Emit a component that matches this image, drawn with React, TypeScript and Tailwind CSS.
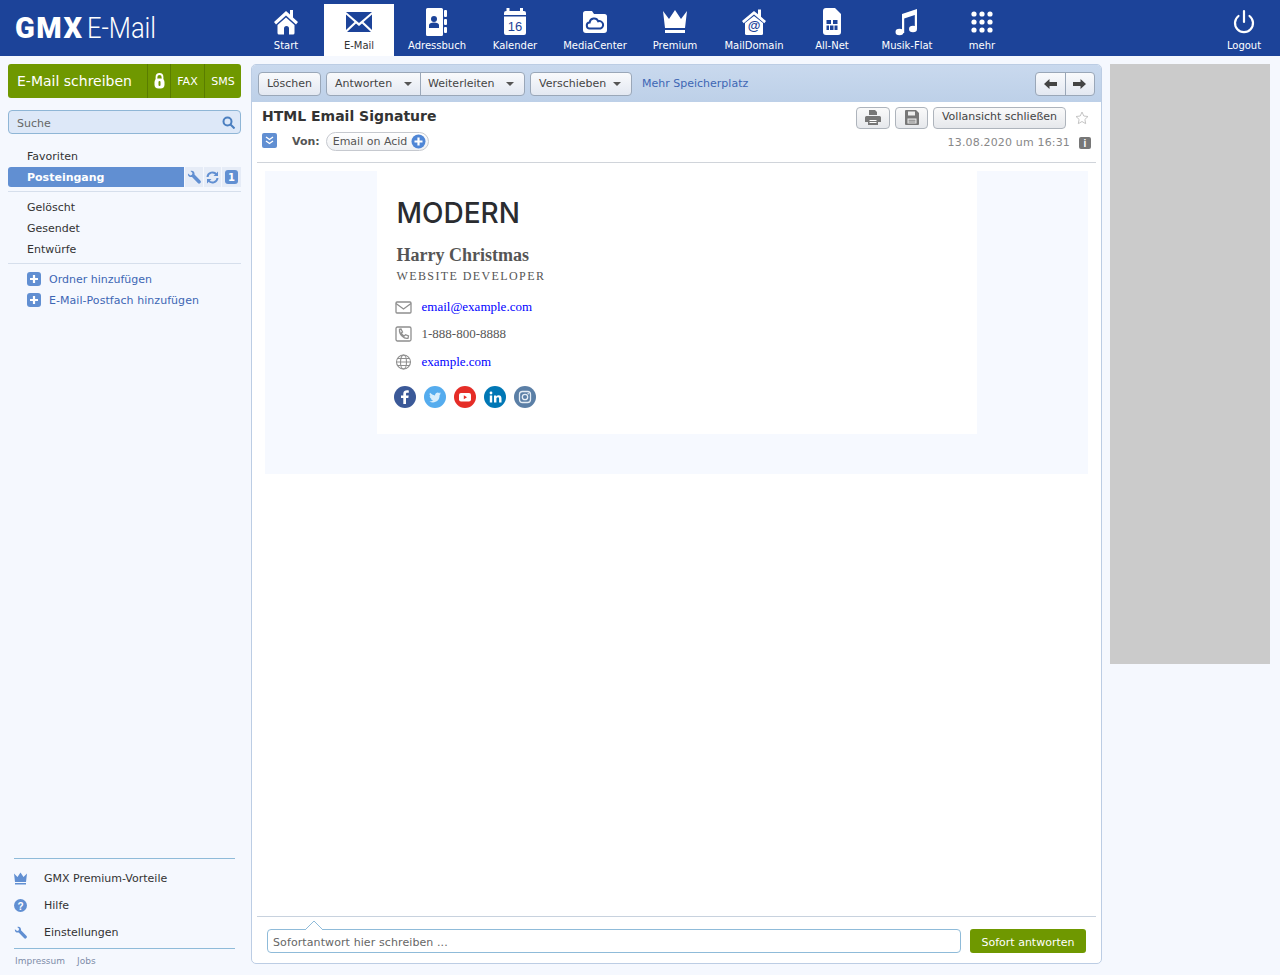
import React from "react";

const F = "font-['DejaVu_Sans',Verdana,sans-serif]";

function TopIcon({ name }: { name: string }) {
  const blue = "#1c4399";
  const c = name === "E-Mail" ? blue : "#fff";
  switch (name) {
    case "Start":
      return (
        <svg width="26" height="28" viewBox="0 0 26 28">
          <path d="M1 14 13 3l4 3.600V2h3v7.500l5 4.500-2 2.400L13 7.400 3 16.400z" fill={c} />
          <path d="M4.500 17 13 9.500l8.500 7.500v8a1.500 1.500 0 0 1-1.500 1.500h-4v-6a2.500 2.500 0 0 0-5 0v6H6a1.500 1.500 0 0 1-1.500-1.500z" fill={c} />
        </svg>
      );
    case "E-Mail":
      return (
        <svg width="28" height="24" viewBox="0 0 28 24">
          <path d="M1 2h26L14 13z" fill={c} />
          <path d="M1 4.500 9.500 12 1 20zM27 4.500 18.500 12 27 20zM2 22l9-8.500 3 2.500 3-2.500 9 8.500z" fill={c} />
        </svg>
      );
    case "Adressbuch":
      return (
        <svg width="24" height="28" viewBox="0 0 24 28">
          <path d="M1 1.500A1.500 1.500 0 0 1 2.500 0h14A1.500 1.500 0 0 1 18 1.500v25a1.500 1.500 0 0 1-1.500 1.500h-14A1.500 1.500 0 0 1 1 26.500z" fill={c} />
          <circle cx="9" cy="11" r="3" fill={blue} />
          <path d="M4 20v-3c0-1.500 2-2.500 5-2.500s5 1 5 2.500v3z" fill={blue} />
          <rect x="19" y="2" width="3" height="7" rx="1" fill={c} />
          <rect x="19" y="11" width="3" height="6" rx="1" fill={c} />
          <rect x="19" y="19" width="3" height="6" rx="1" fill={c} />
        </svg>
      );
    case "Kalender":
      return (
        <div className="relative h-[28px] w-[24px]">
          <svg width="24" height="28" viewBox="0 0 24 28">
            <rect x="3.500" y="0" width="3" height="4" fill={c} />
            <rect x="17" y="0" width="3" height="4" fill={c} />
            <path d="M1 5a2 2 0 0 1 2-2h18a2 2 0 0 1 2 2v2H1z" fill={c} />
            <path d="M1 8.500h22V25a2 2 0 0 1-2 2H3a2 2 0 0 1-2-2z" fill={c} />
          </svg>
          <span className="absolute left-0 right-0 top-[11px] text-center font-['Liberation_Sans',sans-serif] text-[13px] leading-[15px] text-[#1c4399]">16</span>
        </div>
      );
    case "MediaCenter":
      return (
        <svg width="26" height="24" viewBox="0 0 26 24">
          <path d="M1 3.500A2.500 2.500 0 0 1 3.500 1H10l2 3h10.500A2.500 2.500 0 0 1 25 6.500V20a3 3 0 0 1-3 3H4a3 3 0 0 1-3-3z" fill={c} />
          <path d="M8 18.500a3 3 0 0 1-.4-6 4.500 4.500 0 0 1 8.600-1.200 3.700 3.700 0 0 1 2.300 7.200z" fill="none" stroke={blue} strokeWidth="2" />
        </svg>
      );
    case "Premium":
      return (
        <svg width="26" height="24" viewBox="0 0 26 24">
          <path d="M1 1l6 8 6-9 6 9 6-8-2 17H3z" fill={c} />
          <rect x="3" y="20" width="20" height="3" fill={c} />
        </svg>
      );
    case "MailDomain":
      return (
        <div className="relative h-[28px] w-[26px]">
          <svg width="26" height="28" viewBox="0 0 26 28">
            <path d="M1 13 13 3l4 3.300V1.500h3v7.300l5 4.200-1.700 2.200L13 6.500 2.700 15.200z" fill={c} />
            <path d="M4 15 13 8l9 7v10.500a1.500 1.500 0 0 1-1.500 1.500h-15A1.500 1.500 0 0 1 4 25.500z" fill={c} />
          </svg>
          <span className="absolute left-0 right-0 top-[11px] text-center font-['Liberation_Sans',sans-serif] text-[13px] font-bold leading-[14px] text-[#1c4399]">@</span>
        </div>
      );
    case "All-Net":
      return (
        <svg width="18" height="27" viewBox="0 0 18 27">
          <path d="M3 0h9l6 6v18a3 3 0 0 1-3 3H3a3 3 0 0 1-3-3V3a3 3 0 0 1 3-3z" fill={c} />
          <path d="M3.500 12H8v4H3.500zM10 12h4.500v4H10zM3.500 17.500H6V22H3.500zM7 17.500h3.500V22H7zM11.500 17.500h3V22h-3z" fill={blue} />
        </svg>
      );
    case "Musik-Flat":
      return (
        <svg width="24" height="28" viewBox="0 0 24 28">
          <path d="M7 6 22 1v20h-2.200V7L9.200 10.500V25H7z" fill={c} />
          <ellipse cx="4.500" cy="24" rx="4" ry="3.300" fill={c} />
          <ellipse cx="18" cy="21" rx="4" ry="3.300" fill={c} />
        </svg>
      );
    case "mehr":
      return (
        <svg width="22" height="22" viewBox="0 0 22 22" fill={c}>
          {[3, 11, 19].flatMap((y) => [3, 11, 19].map((x) => <circle key={`${x}-${y}`} cx={x} cy={y} r="2.600" />))}
        </svg>
      );
    default:
      return (
        <svg width="24" height="26" viewBox="0 0 24 26" fill="none" stroke={c} strokeWidth="2.200" strokeLinecap="round">
          <path d="M12 2v11" />
          <path d="M6.500 7a9 9 0 1 0 11 0" />
        </svg>
      );
  }
}

const tabs: [string, string][] = [
  ["Start", "w-[76px]"],
  ["E-Mail", "w-[70px]"],
  ["Adressbuch", "w-[86px]"],
  ["Kalender", "w-[70px]"],
  ["MediaCenter", "w-[90px]"],
  ["Premium", "w-[70px]"],
  ["MailDomain", "w-[88px]"],
  ["All-Net", "w-[68px]"],
  ["Musik-Flat", "w-[82px]"],
  ["mehr", "w-[68px]"],
];

function Tab({ name, w }: { name: string; w: string }) {
  const active = name === "E-Mail";
  return (
    <div className={`flex h-[52px] flex-col items-center ${w} ${active ? "bg-white text-[#333]" : "text-white"}`}>
      <div className="flex h-[35px] items-center justify-center">
        <TopIcon name={name} />
      </div>
      <span className="text-[10px] leading-[14px]">{name}</span>
    </div>
  );
}

function Plus() {
  return (
    <svg className="-mt-[4px]" width="14" height="14" viewBox="0 0 14 14">
      <rect width="14" height="14" rx="3" fill="#618fd2" />
      <path d="M7 3v8M3 7h8" stroke="#fff" strokeWidth="2.200" />
    </svg>
  );
}

function Wrench({ color = "#618fd2", size = 14 }: { color?: string; size?: number }) {
  return (
    <svg width={size} height={size} viewBox="0 0 14 14">
      <path d="M1 3.500 3.300 5.500 5 4.800 5.500 3 3.500 1C5.500 0 8 1.500 7.500 4.500L13.300 10.500a1.700 1.700 0 0 1-2.500 2.500L5 7C2.500 7.500 .5 6 1 3.500z" fill={color} />
    </svg>
  );
}

function Btn({ children, className = "" }: { children: React.ReactNode; className?: string }) {
  return (
    <div className={`flex h-[24px] items-center justify-center rounded-[4px] border border-[#9aa7b8] bg-gradient-to-b from-[#f9fafc] to-[#e3e8f1] pt-[1px] text-[11px] text-[#444] ${className}`}>
      {children}
    </div>
  );
}

function Caret() {
  return <span className="ml-auto h-0 w-0 border-x-[4px] border-t-[4px] border-x-transparent border-t-[#555]" />;
}

function Row({ children, className = "text-[#333]" }: { children: React.ReactNode; className?: string }) {
  return <div className={`flex h-[21px] items-center pl-[19px] pt-[2px] text-[11px] ${className}`}>{children}</div>;
}

function FootRow({ icon, label }: { icon: React.ReactNode; label: string }) {
  return (
    <div className="flex h-[27px] items-center pt-[2px] text-[11px] text-[#333]">
      <span className="-mt-[2px] flex w-[30px]">{icon}</span>
      {label}
    </div>
  );
}

function Sidebar() {
  return (
    <aside className="flex h-[904px] w-[233px] flex-col">
      <div className="flex h-[34px] items-stretch rounded-[3px] bg-[#6f9800] text-white">
        <div className="flex w-[139px] items-center pl-[9px] text-[14px]">E-Mail schreiben</div>
        <div className="flex w-[23px] items-center justify-center border-l border-[#5a7d00]">
          <svg width="11" height="16" viewBox="0 0 11 16">
            <path d="M2.500 7V4a3 3 0 0 1 6 0V7" fill="none" stroke="#fff" strokeWidth="1.800" />
            <rect x=".5" y="5.500" width="10" height="10" rx="4" fill="#fff" />
            <rect x="4.500" y="8" width="2" height="5" rx="1" fill="#6f9800" />
          </svg>
        </div>
        <div className="flex w-[34px] items-center justify-center border-l border-[#5a7d00] pt-[2px] text-[11px]">FAX</div>
        <div className="flex w-[37px] items-center justify-center border-l border-[#5a7d00] pt-[2px] text-[11px]">SMS</div>
      </div>
      <div className="mt-[12px] flex h-[24px] items-center justify-between rounded-[4px] border border-[#8fb6d6] bg-[#dde8f8] pl-[8px] pr-[5px] text-[11px] text-[#666]">
        <span className="pt-[4px]">Suche</span>
        <svg width="13" height="13" viewBox="0 0 13 13" fill="none" stroke="#4b7fc0" strokeWidth="2">
          <circle cx="5.500" cy="5.500" r="4" />
          <path d="M8.500 8.500 12.500 12.500" />
        </svg>
      </div>
      <div className="mt-[12px]"><Row>Favoriten</Row></div>
      <div className="flex h-[20px] gap-[1px]">
        <div className="flex w-[176px] items-center rounded-l-[3px] bg-[#618fd2] pl-[19px] pt-[2px] text-[11px] font-bold text-white">Posteingang</div>
        <div className="flex w-[18px] items-center justify-center bg-[#e6ecf7]"><Wrench /></div>
        <div className="flex w-[17px] items-center justify-center bg-[#e6ecf7]">
          <svg width="13" height="13" viewBox="0 0 13 13" fill="none" stroke="#618fd2" strokeWidth="2">
            <path d="M1.500 6A5 5 0 0 1 10.500 3.500M11.500 7A5 5 0 0 1 2.500 9.500" />
            <path d="M12 .5v4.500H7.500zM1 12.500V8h4.500z" fill="#618fd2" stroke="none" />
          </svg>
        </div>
        <div className="flex w-[19px] items-center justify-center bg-[#e6ecf7]">
          <span className="flex h-[14px] w-[13px] items-center justify-center rounded-[3px] bg-[#618fd2] text-[10px] font-bold text-white">1</span>
        </div>
      </div>
      <div className="mt-[4px] h-px bg-[#d6dfec]" />
      <div className="mt-[5px]"><Row>Gelöscht</Row></div>
      <Row>Gesendet</Row>
      <Row>Entwürfe</Row>
      <div className="mt-[3px] h-px bg-[#d6dfec]" />
      <div className="mt-[5px]"><Row className="gap-[8px] text-[#3d66b4]"><Plus />Ordner hinzufügen</Row></div>
      <Row className="gap-[8px] tracking-[.05px] text-[#3d66b4]"><Plus />E-Mail-Postfach hinzufügen</Row>
      <div className="mt-auto ml-[6px] w-[221px] border-t border-[#8fbbd9] pt-[6px]">
        <FootRow
          label="GMX Premium-Vorteile"
          icon={<svg width="13" height="13" viewBox="0 0 13 13" fill="#618fd2"><path d="M0 1.500 3.500 5 6.500 .5 9.500 5 13 1.500 12 10H1zM1 11h11v1.500H1z" /></svg>}
        />
        <FootRow
          label="Hilfe"
          icon={
            <svg width="13" height="13" viewBox="0 0 13 13">
              <circle cx="6.500" cy="6.500" r="6.500" fill="#618fd2" />
              <text x="6.500" y="10.500" textAnchor="middle" fontSize="10" fontWeight="700" fill="#fff" fontFamily="Liberation Sans">?</text>
            </svg>
          }
        />
        <FootRow label="Einstellungen" icon={<Wrench size={13} />} />
        <div className="mt-[2px] border-t border-[#8fbbd9] pl-[1px] pt-[6px] text-[9px] leading-[13px] text-[#7d8ca8]">
          <span>Impressum</span>
          <span className="ml-[12px]">Jobs</span>
        </div>
      </div>
    </aside>
  );
}

function Signature() {
  return (
    <div className="mx-[13px] mt-[8px] flex h-[303px] justify-center bg-[#f6f9ff]">
      <div className="h-[263px] w-[600px] bg-white pl-[20px] pt-[24px] font-['Liberation_Serif',serif]">
        <div className="font-['Inter',sans-serif] text-[28px] font-medium leading-[36px] text-[#2a2c30]">MODERN</div>
        <div className="mt-[14px] text-[18px] font-bold leading-[21px] text-[#555]">Harry Christmas</div>
        <div className="mt-[3px] text-[12px] leading-[15px] tracking-[1.400px] text-[#555]">WEBSITE DEVELOPER</div>
        <div className="mt-[13px] flex h-[20px] items-center text-[13px] text-[#0000ff]">
          <svg className="ml-[-2px]" width="17" height="13" viewBox="0 0 17 13" fill="none" stroke="#8f8f8f" strokeWidth="1.300">
            <rect x="1" y="1" width="15" height="11" rx="1" />
            <path d="M1 2.500 8.500 8 16 2.500" />
          </svg>
          <span className="ml-[10px]">email@example.com</span>
        </div>
        <div className="mt-[7px] flex h-[20px] items-center text-[13px] text-[#555]">
          <svg className="ml-[-2px]" width="17" height="16" viewBox="0 0 17 16" fill="none" stroke="#8f8f8f" strokeWidth="1.300">
            <rect x="1" y="1" width="15" height="14" rx="1.500" />
            <path d="M4 3.500 6 3l1.500 3-1.300 1a6 6 0 0 0 3 3l1.300-1.300 3 1.300-.5 2.300c-4 1-9-4-8.500-8.800z" />
          </svg>
          <span className="ml-[10px]">1-888-800-8888</span>
        </div>
        <div className="mt-[8px] flex h-[20px] items-center text-[13px] text-[#0000ff]">
          <svg className="ml-[-2px]" width="17" height="16" viewBox="0 0 17 16" fill="none" stroke="#8f8f8f" strokeWidth="1.100">
            <circle cx="8.500" cy="8" r="7" />
            <ellipse cx="8.500" cy="8" rx="3" ry="7" />
            <path d="M1.500 8h14M2.500 4.500h12M2.500 11.500h12" />
          </svg>
          <span className="ml-[10px]">example.com</span>
        </div>
        <div className="ml-[-3px] mt-[14px] flex gap-[8px]">
          <svg width="22" height="22" viewBox="0 0 22 22"><circle cx="11" cy="11" r="11" fill="#3b5998" /><path d="M12 18v-6h2.300l.4-2.600H12V8c0-.8.3-1.200 1.300-1.200h1.500V4.500c-2.800-.4-5.500 0-5.500 3.200v1.700H7V12h2.300v6z" fill="#fff" /></svg>
          <svg width="22" height="22" viewBox="0 0 22 22"><circle cx="11" cy="11" r="11" fill="#55acee" /><path d="M17 7.200l-1.500.5 1.200-1.500-1.600.7A2.700 2.700 0 0 0 11 9.400 7 7 0 0 1 6 6.800c-.8 1.300-.3 2.600.7 3.400l-1-.3c0 1.300.8 2.200 2 2.600h-1c.4 1 1.300 1.600 2.400 1.700A5.500 5.500 0 0 1 5.300 15.500c5 2.600 10.500-.5 10.300-6.200z" fill="#d9eefc" /></svg>
          <svg width="22" height="22" viewBox="0 0 22 22"><circle cx="11" cy="11" r="11" fill="#e52d27" /><rect x="5" y="7" width="12" height="8.500" rx="2" fill="#fff" /><path d="M9.800 9.200v4l3.200-2z" fill="#e52d27" /></svg>
          <svg width="22" height="22" viewBox="0 0 22 22"><circle cx="11" cy="11" r="11" fill="#0077b5" /><circle cx="7" cy="7" r="1.400" fill="#fff" /><path d="M5.800 9.500h2.400V16.500H5.800zM10 9.500h2.300v1c.6-.8 1.400-1.200 2.300-1.200 1.900 0 2.900 1.200 2.900 3.300v3.900h-2.400v-3.500c0-1.100-.4-1.700-1.300-1.700s-1.400.7-1.400 1.800v3.400H10z" fill="#fff" /></svg>
          <svg width="22" height="22" viewBox="0 0 22 22" fill="none"><circle cx="11" cy="11" r="11" fill="#5b7fa6" /><rect x="5.500" y="5.500" width="11" height="11" rx="3" stroke="#e5edf5" strokeWidth="1.300" /><circle cx="11" cy="11" r="2.700" stroke="#e5edf5" strokeWidth="1.300" /><circle cx="14.200" cy="7.800" r=".8" fill="#e5edf5" /></svg>
        </div>
      </div>
    </div>
  );
}

function MainPanel() {
  return (
    <main className="ml-[10px] flex h-[900px] w-[851px] flex-col overflow-hidden rounded-[5px] border border-[#bccde4] bg-white">
      <div className="flex h-[37px] items-center bg-gradient-to-b from-[#c9d9ee] to-[#bdd0e8] px-[6px]">
        <Btn className="w-[63px]">Löschen</Btn>
        <div className="ml-[5px] flex h-[24px] w-[199px] rounded-[4px] border border-[#9aa7b8] bg-gradient-to-b from-[#f9fafc] to-[#e3e8f1] pt-[1px] text-[11px] text-[#444]">
          <div className="flex w-[93px] items-center px-[8px]">Antworten<Caret /></div>
          <div className="-mt-[1px] flex flex-1 items-center border-l border-[#9aa7b8] pl-[7px] pr-[10px] pt-[1px]">Weiterleiten<Caret /></div>
        </div>
        <Btn className="ml-[5px] w-[102px] !justify-start pl-[8px] pr-[10px]">Verschieben<Caret /></Btn>
        <span className="ml-[10px] pt-[1px] text-[11px] text-[#3d66b4]">Mehr Speicherplatz</span>
        <div className="ml-auto flex h-[24px] w-[60px] rounded-[4px] border border-[#9aa7b8] bg-gradient-to-b from-[#f9fafc] to-[#e3e8f1]">
          <div className="flex flex-1 items-center justify-center">
            <svg width="13" height="10" viewBox="0 0 13 10" fill="#444"><path d="M0 5 5.500 0v3H13v4H5.500v3z" /></svg>
          </div>
          <div className="flex flex-1 items-center justify-center border-l border-[#9aa7b8]">
            <svg width="13" height="10" viewBox="0 0 13 10" fill="#444"><path d="M13 5 7.500 0v3H0v4h7.500v3z" /></svg>
          </div>
        </div>
      </div>
      <div className="mx-[5px] h-[61px] border-b border-[#d0d4da]">
        <div className="flex h-[29px] items-center px-[5px] pt-[2px]">
          <span className="-mt-[2px] text-[14px] font-bold text-[#333]">HTML Email Signature</span>
          <div className="ml-auto flex items-center">
            <div className="flex h-[22px] w-[34px] items-center justify-center rounded-[4px] border border-[#aeb4bc] bg-gradient-to-b from-[#fafafa] to-[#e6e8ec]">
              <svg width="16" height="15" viewBox="0 0 16 15" fill="#777"><path d="M4 0h6l2 2v3H4zM1.500 6h13A1.500 1.500 0 0 1 16 7.500V12h-3v3H3v-3H0V7.500A1.500 1.500 0 0 1 1.500 6z" /><path d="M4.500 10.500h7M4.500 12.500h7" stroke="#fff" /></svg>
            </div>
            <div className="ml-[5px] flex h-[22px] w-[33px] items-center justify-center rounded-[4px] border border-[#aeb4bc] bg-gradient-to-b from-[#fafafa] to-[#e6e8ec]">
              <svg width="14" height="15" viewBox="0 0 14 15" fill="#777"><path d="M1 0h10l3 3v11a1 1 0 0 1-1 1H1a1 1 0 0 1-1-1V1a1 1 0 0 1 1-1z" /><rect x="3" y="1.500" width="7" height="4" fill="#eee" /><rect x="2.500" y="8.500" width="9" height="5" fill="#eee" /><path d="M3.500 10.200h7M3.500 12h7" stroke="#777" /></svg>
            </div>
            <div className="ml-[5px] flex h-[22px] w-[133px] items-center justify-center rounded-[4px] border border-[#aeb4bc] bg-gradient-to-b from-[#fafafa] to-[#e6e8ec] text-[11px] text-[#444]">Vollansicht schließen</div>
            <svg className="ml-[9px] mr-[2px]" width="14" height="14" viewBox="0 0 14 14" fill="none" stroke="#c4c4c4"><path d="M7 1 8.800 5l4.200.5-3.100 2.900.8 4.300L7 10.500 3.300 12.700l.8-4.300L1 5.500 5.200 5z" /></svg>
          </div>
        </div>
        <div className="flex h-[22px] items-center px-[5px] pt-[2px]">
          <span className="-mt-[5px] flex h-[15px] w-[15px] items-center justify-center rounded-[2px] bg-[#618fd2]">
            <svg width="9" height="9" viewBox="0 0 9 9" fill="none" stroke="#fff" strokeWidth="1.400"><path d="M1 1 4.500 3.500 8 1M1 5 4.500 7.500 8 5" /></svg>
          </span>
          <span className="-mt-[1px] ml-[15px] text-[11px] font-bold text-[#555]">Von:</span>
          <span className="-mt-[4px] ml-[6px] flex h-[19px] w-[103px] items-center rounded-full border border-[#c6c9cf] bg-gradient-to-b from-white to-[#eef0f3] pl-[6px] text-[11px] text-[#555]">
            <span className="pt-[2px]">Email on Acid</span>
            <svg className="ml-[4px]" width="15" height="15" viewBox="0 0 15 15"><circle cx="7.500" cy="7.500" r="7" fill="#4f86d6" /><path d="M7.500 3.500v8M3.500 7.500h8" stroke="#fff" strokeWidth="2.200" /></svg>
          </span>
          <span className="ml-auto text-[11px] tracking-[.16px] text-[#888]">13.08.2020 um 16:31</span>
          <span className="ml-[9px] flex h-[12px] w-[12px] items-center justify-center rounded-[2px] bg-[#777] font-['Liberation_Sans',sans-serif] text-[10px] font-bold text-white">i</span>
        </div>
      </div>
      <Signature />
      <div className="relative mx-[5px] mt-auto h-[47px] border-t border-[#c8d2de] pt-[12px]">
        <svg className="absolute left-[48px] top-[3px]" width="18" height="10" viewBox="0 0 18 10" fill="#fff"><path d="M0 10 9 1l9 9" stroke="#8fbbd9" /></svg>
        <div className="flex gap-[9px] px-[10px]">
          <div className="flex h-[24px] w-[694px] items-center rounded-[4px] border border-[#8fbbd9] pl-[5px] pt-[4px] text-[11px] tracking-[.1px] text-[#666]">Sofortantwort hier schreiben ...</div>
          <div className="flex h-[24px] w-[116px] items-center justify-center rounded-[3px] bg-[#6f9800] pt-[4px] text-[11px] text-white">Sofort antworten</div>
        </div>
      </div>
    </main>
  );
}

export default function App() {
  return (
    <div className={`flex h-[975px] w-[1280px] flex-col overflow-hidden bg-[#f5f8fe] ${F}`}>
      <header className="flex h-[56px] items-end bg-[#1c4399] text-white">
        <div className="flex h-[56px] w-[248px] items-center pl-[15px] font-['Roboto',sans-serif]">
          <span className="text-[29px] font-black leading-[56px] tracking-[1.500px]">GMX</span>
          <span className="ml-[4px] origin-left scale-x-[.88] text-[29px] font-light leading-[56px]">E-Mail</span>
        </div>
        {tabs.map(([n, w]) => <Tab key={n} name={n} w={w} />)}
        <div className="ml-auto mr-[2px] w-[68px]">
          <Tab name="Logout" w="w-[68px]" />
        </div>
      </header>
      <div className="flex h-[919px] px-[8px] pt-[8px]">
        <Sidebar />
        <div className="flex items-start">
          <MainPanel />
          <div className="ml-[8px] h-[600px] w-[160px] bg-[#cbcbcb]" />
        </div>
      </div>
    </div>
  );
}
